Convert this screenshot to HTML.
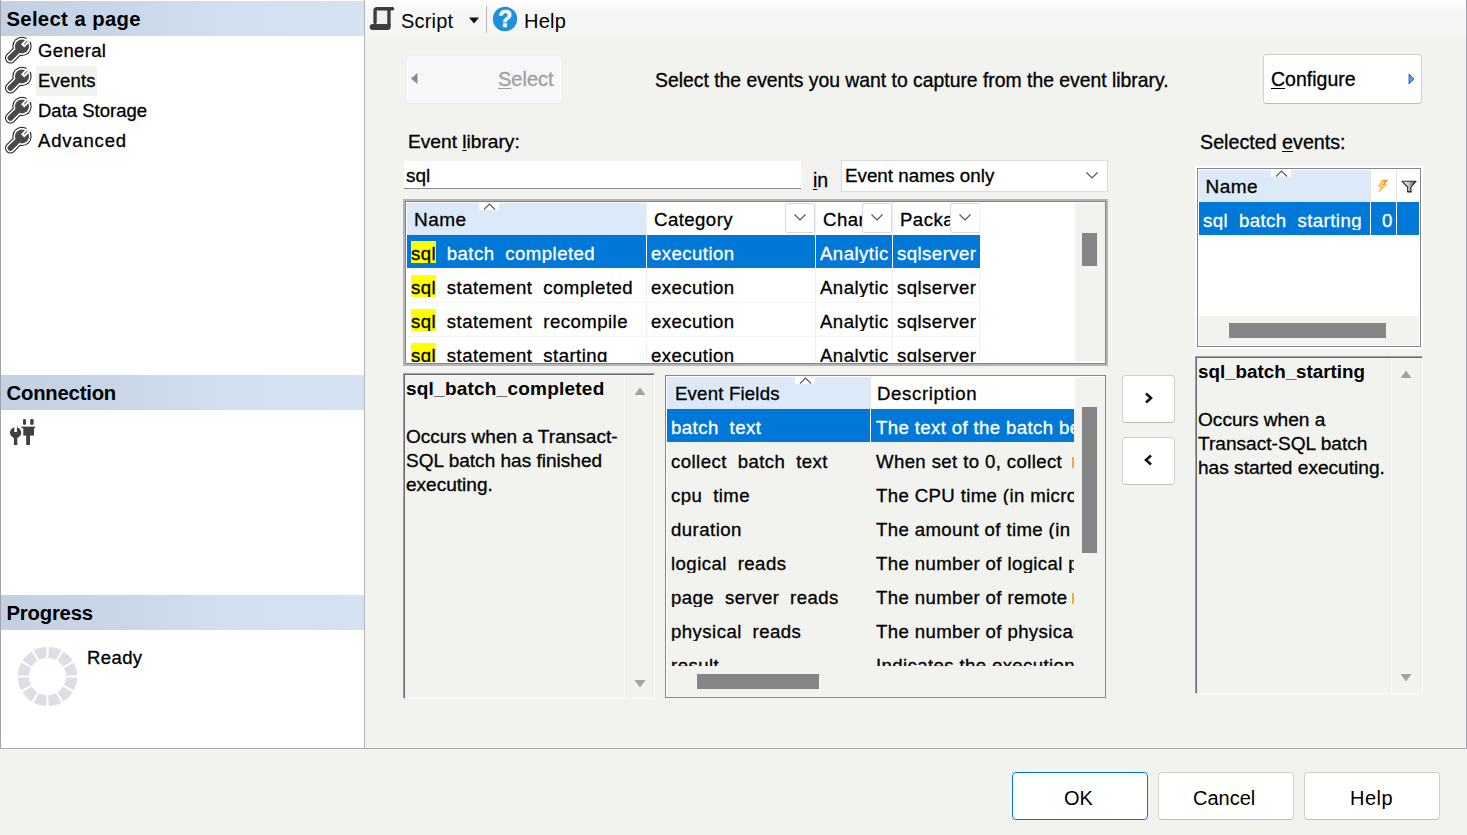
<!DOCTYPE html>
<html>
<head>
<meta charset="utf-8">
<title>New Session</title>
<style>
*{box-sizing:border-box;margin:0;padding:0}
html,body{width:1467px;height:835px;overflow:hidden;background:#f2f2ee}
body{font-family:"Liberation Sans",sans-serif;color:#000;-webkit-text-stroke:.3px currentColor;position:relative;font-size:18.5px}
.a{position:absolute}
.t{position:absolute;white-space:nowrap;line-height:1}
u{text-decoration:underline;text-underline-offset:2px;text-decoration-thickness:1px}
/* left panel */
#left{left:0;top:0;width:365px;height:749px;background:#fff;border-left:1px solid #a3a3ab;border-right:1px solid #b4b4b8;border-bottom:1px solid #b9b9bd}
.hd{left:1px;width:363px;height:35px;background:linear-gradient(90deg,#c3d0e2 0%,#c9d7e8 35%,#d3e0f1 65%,#d5e2f2 100%)}
.hd .t{left:5.5px;top:8.3px;font-weight:bold;font-size:20.3px;letter-spacing:-.2px;-webkit-text-stroke:0}
.pg{font-size:18.5px;letter-spacing:.18px}
/* toolbar */
#tb{left:365px;top:0;width:1102px;height:38px;background:linear-gradient(#fefefe 0,#fbfbfb 6px,#f6f6f6 10px,#f6f6f6 33px,#f2f2ee 38px)}
.tbt{font-size:20px;-webkit-text-stroke:0}
/* grids */
.grid{background:#fff;overflow:hidden}
.cell{position:absolute;overflow:hidden;white-space:nowrap;line-height:1}
.hdt{font-size:18.6px;letter-spacing:.45px;padding-top:2.5px}
.rt{font-size:18.6px;letter-spacing:.45px;padding-top:4px}
.rt i{display:inline-block;width:calc(.556em + .45px)}
.ds{letter-spacing:.38px}
.y{position:absolute;background:#ffff00}
.w{color:#fff}
.sel{background:#0078d7;color:#fff}
.hl{background:#ffff00;color:#000}
.btn{background:#fff;border:1px solid #d0d0d0;border-bottom-color:#bcbcbc;border-radius:4px}
</style>
</head>
<body>

<div id="tb" class="a"></div>
<!-- LEFT PANEL -->
<div id="left" class="a"></div>
<div class="a hd" style="top:1px"><div class="t" style="letter-spacing:.3px;word-spacing:.4px">Select a page</div></div>
<div class="a hd" style="top:375px"><div class="t">Connection</div></div>
<div class="a hd" style="top:595px"><div class="t">Progress</div></div>

<div class="a" style="left:36px;top:66px;width:61px;height:30px;background:#f2f2ee"></div>
<div class="t pg" style="left:38px;top:42px;letter-spacing:.35px">General</div>
<div class="t pg" style="left:38px;top:72px">Events</div>
<div class="t pg" style="left:38px;top:102px;letter-spacing:0">Data Storage</div>
<div class="t pg" style="left:38px;top:132px;letter-spacing:.82px">Advanced</div>
<div class="t pg" style="left:87px;top:649px;letter-spacing:.4px">Ready</div>

<svg class="a" style="left:4px;top:36px" width="30" height="28" viewBox="0 0 30 28">
<g fill="none" stroke-linecap="round"><circle cx="18" cy="10.4" r="9.6" fill="#1a1a1a" stroke="none"/><path d="M16.5 12 L6.4 22.1" stroke="#1a1a1a" stroke-width="10.8"/>
<circle cx="18" cy="10.4" r="8.6" fill="#fff" stroke="none"/><path d="M16.5 12 L6.4 22.1" stroke="#fff" stroke-width="8.8"/>
<circle cx="18" cy="10.4" r="7" fill="#4a4a4a" stroke="none"/><path d="M16.5 12 L6.4 22.1" stroke="#4a4a4a" stroke-width="5.6"/>
<path d="M18.6 9.8 L26.4 2" stroke="#fff" stroke-width="4.6" stroke-linecap="butt"/><path d="M20.2 8.2 L23.4 5" stroke="#222" stroke-width="1" stroke-linecap="butt"/></g></svg>
<svg class="a" style="left:4px;top:66px" width="30" height="28" viewBox="0 0 30 28">
<g fill="none" stroke-linecap="round"><circle cx="18" cy="10.4" r="9.6" fill="#1a1a1a" stroke="none"/><path d="M16.5 12 L6.4 22.1" stroke="#1a1a1a" stroke-width="10.8"/>
<circle cx="18" cy="10.4" r="8.6" fill="#fff" stroke="none"/><path d="M16.5 12 L6.4 22.1" stroke="#fff" stroke-width="8.8"/>
<circle cx="18" cy="10.4" r="7" fill="#4a4a4a" stroke="none"/><path d="M16.5 12 L6.4 22.1" stroke="#4a4a4a" stroke-width="5.6"/>
<path d="M18.6 9.8 L26.4 2" stroke="#fff" stroke-width="4.6" stroke-linecap="butt"/><path d="M20.2 8.2 L23.4 5" stroke="#222" stroke-width="1" stroke-linecap="butt"/></g></svg>
<svg class="a" style="left:4px;top:96px" width="30" height="28" viewBox="0 0 30 28">
<g fill="none" stroke-linecap="round"><circle cx="18" cy="10.4" r="9.6" fill="#1a1a1a" stroke="none"/><path d="M16.5 12 L6.4 22.1" stroke="#1a1a1a" stroke-width="10.8"/>
<circle cx="18" cy="10.4" r="8.6" fill="#fff" stroke="none"/><path d="M16.5 12 L6.4 22.1" stroke="#fff" stroke-width="8.8"/>
<circle cx="18" cy="10.4" r="7" fill="#4a4a4a" stroke="none"/><path d="M16.5 12 L6.4 22.1" stroke="#4a4a4a" stroke-width="5.6"/>
<path d="M18.6 9.8 L26.4 2" stroke="#fff" stroke-width="4.6" stroke-linecap="butt"/><path d="M20.2 8.2 L23.4 5" stroke="#222" stroke-width="1" stroke-linecap="butt"/></g></svg>
<svg class="a" style="left:4px;top:126px" width="30" height="28" viewBox="0 0 30 28">
<g fill="none" stroke-linecap="round"><circle cx="18" cy="10.4" r="9.6" fill="#1a1a1a" stroke="none"/><path d="M16.5 12 L6.4 22.1" stroke="#1a1a1a" stroke-width="10.8"/>
<circle cx="18" cy="10.4" r="8.6" fill="#fff" stroke="none"/><path d="M16.5 12 L6.4 22.1" stroke="#fff" stroke-width="8.8"/>
<circle cx="18" cy="10.4" r="7" fill="#4a4a4a" stroke="none"/><path d="M16.5 12 L6.4 22.1" stroke="#4a4a4a" stroke-width="5.6"/>
<path d="M18.6 9.8 L26.4 2" stroke="#fff" stroke-width="4.6" stroke-linecap="butt"/><path d="M20.2 8.2 L23.4 5" stroke="#222" stroke-width="1" stroke-linecap="butt"/></g></svg>
<svg class="a" style="left:368px;top:5px" width="28" height="27" viewBox="0 0 28 27">
<rect x="8" y="5" width="12" height="15" fill="#f0eef0"/>
<path d="M7.05 17.5 V5.6 Q7.05 3.8 8.9 3.8 H24.6" fill="none" stroke="#3d3d3d" stroke-width="3.4" stroke-linecap="round" stroke-linejoin="round"/>
<path d="M20.95 4 V21" fill="none" stroke="#3d3d3d" stroke-width="3.4"/>
<path d="M4.6 19.1 H22.65 V22 Q22.65 24.9 19.7 24.9 H4.6 Q1.7 24.9 1.7 22 Q1.7 19.1 4.6 19.1 Z" fill="#3d3d3d"/></svg>
<svg class="a" style="left:468px;top:17px" width="12" height="7" viewBox="0 0 12 7"><path d="M1 0.5 H11 L6 6.5 Z" fill="#111"/></svg>
<div class="a" style="left:486px;top:6px;width:1px;height:27px;background:#b8b8b8"></div>
<svg class="a" style="left:492px;top:6px" width="26" height="26" viewBox="0 0 26 26"><circle cx="13" cy="13" r="12.2" fill="#1e90dd"/>
<text x="13.2" y="21.4" text-anchor="middle" font-family="Liberation Sans, sans-serif" font-weight="bold" font-size="23" fill="#fff" stroke="#fff" stroke-width=".5">?</text></svg>
<svg class="a" style="left:8px;top:417px" width="30" height="30" viewBox="0 0 30 30"><g fill="#3f3f3f">
<path d="M6.3 10.2 A5.6 5.6 0 1 0 8.9 10.2 V15 H6.3 Z"/><rect x="5.9" y="19" width="3.4" height="9"/>
<rect x="15" y="2" width="3" height="6" rx="1.4"/><rect x="22.2" y="2" width="3.4" height="6" rx="1.4"/>
<rect x="13.4" y="9.6" width="13.8" height="1.6"/><rect x="15.3" y="11" width="10.7" height="7.6"/><rect x="18.2" y="18" width="3.8" height="10"/>
</g></svg>
<svg class="a" style="left:17px;top:646px" width="61" height="61" viewBox="0 0 61 61"><g fill="#dcdfe3" style="filter:blur(.45px)"><path d="M31.8 0.7 A29.8 29.8 0 0 1 44.3 4.1 L39.1 14.0 A18.6 18.6 0 0 0 31.3 11.9 Z"/><path d="M46.5 5.4 A29.8 29.8 0 0 1 55.6 14.5 L46.2 20.5 A18.6 18.6 0 0 0 40.5 14.8 Z"/><path d="M56.9 16.7 A29.8 29.8 0 0 1 60.3 29.2 L49.1 29.7 A18.6 18.6 0 0 0 47.0 21.9 Z"/><path d="M60.3 31.8 A29.8 29.8 0 0 1 56.9 44.3 L47.0 39.1 A18.6 18.6 0 0 0 49.1 31.3 Z"/><path d="M55.6 46.5 A29.8 29.8 0 0 1 46.5 55.6 L40.5 46.2 A18.6 18.6 0 0 0 46.2 40.5 Z"/><path d="M44.3 56.9 A29.8 29.8 0 0 1 31.8 60.3 L31.3 49.1 A18.6 18.6 0 0 0 39.1 47.0 Z"/><path d="M29.2 60.3 A29.8 29.8 0 0 1 16.7 56.9 L21.9 47.0 A18.6 18.6 0 0 0 29.7 49.1 Z"/><path d="M14.5 55.6 A29.8 29.8 0 0 1 5.4 46.5 L14.8 40.5 A18.6 18.6 0 0 0 20.5 46.2 Z"/><path d="M4.1 44.3 A29.8 29.8 0 0 1 0.7 31.8 L11.9 31.3 A18.6 18.6 0 0 0 14.0 39.1 Z"/><path d="M0.7 29.2 A29.8 29.8 0 0 1 4.1 16.7 L14.0 21.9 A18.6 18.6 0 0 0 11.9 29.7 Z"/><path d="M5.4 14.5 A29.8 29.8 0 0 1 14.5 5.4 L20.5 14.8 A18.6 18.6 0 0 0 14.8 20.5 Z"/><path d="M16.7 4.1 A29.8 29.8 0 0 1 29.2 0.7 L29.7 11.9 A18.6 18.6 0 0 0 21.9 14.0 Z"/></g></svg>
<!-- TOOLBAR -->
<div class="t tbt" style="left:401px;top:10.6px;letter-spacing:.2px">Script</div>
<div class="t tbt" style="left:524px;top:10.6px;letter-spacing:.25px">Help</div>

<div class="a" style="left:1466px;top:0;width:1px;height:749px;background:#a4a4ac"></div>
<!-- MAIN -->
<!-- Select button -->
<div class="a" style="left:405px;top:55px;width:158px;height:49px;background:#f7f7f7;border:1px solid #ececec;border-radius:4px"></div>
<svg class="a" style="left:410px;top:72px" width="9" height="13" viewBox="0 0 9 13"><path d="M7.5 1 L1 6.5 L7.5 12 Z" fill="#8c8c8c"/></svg>
<div class="t" style="left:498px;top:69px;font-size:20px;color:#a39ea6"><u>S</u>elect</div>

<div class="t" id="instr" style="left:655px;top:71px;font-size:19.35px">Select the events you want to capture from the event library.</div>

<!-- Configure button -->
<div class="a btn" style="left:1263px;top:54px;width:159px;height:50px;background:#fff"></div>
<div class="t" style="left:1271px;top:70px;font-size:19.5px"><u>C</u>onfigure</div>
<svg class="a" style="left:1408px;top:73px" width="7" height="12" viewBox="0 0 7 12"><path d="M1 1 L6 6 L1 11 Z" fill="#5b9bd5" stroke="#2f6fb5" stroke-width="1"/></svg>

<!-- Event library label + search -->
<div class="t" style="left:408px;top:132px;font-size:19.15px">Event <u>l</u>ibrary:</div>
<div class="a" style="left:404px;top:161px;width:397px;height:28px;background:#fff;border-bottom:1px solid #8a8a8a"></div>
<div class="t" style="left:406px;top:166px;font-size:19px">sql</div>
<div class="t" style="left:813px;top:171px;font-size:19.5px"><u>i</u>n</div>
<div class="a" style="left:841px;top:160px;width:267px;height:32px;background:#fff;border:1px solid #dcdcdc"></div>
<div class="t" style="left:845px;top:167px;font-size:18.8px">Event names only</div>
<svg class="a" style="left:1085px;top:171px" width="14" height="9" viewBox="0 0 14 9"><path d="M1.5 1.5 L7 7 L12.5 1.5" fill="none" stroke="#555" stroke-width="1.2"/></svg>

<!-- EVENTS GRID -->
<div class="a" id="g1" style="left:403px;top:199px;width:705px;height:167px;background:#b4b4b4"></div>
<div class="a" style="left:405px;top:201px;width:701px;height:163px;background:#84848c"></div>
<div class="a" style="left:406px;top:202px;width:699px;height:161px;background:#fff"></div>
<div class="a" style="left:0;top:0;width:1467px;height:362px;overflow:hidden">
<div class="a" style="left:407px;top:203px;width:668px;height:159px;background:#fff"></div>
<div class="a" style="left:1075px;top:203px;width:30px;height:159px;background:#f2f2ee"></div>
<div class="a" style="left:1082px;top:233px;width:15px;height:33px;background:#858585"></div>
<div class="a" style="left:407px;top:203px;width:239px;height:32px;background:#dbe9f8"></div>
<div class="a" style="left:479px;top:203px;width:20px;height:7px;background:#fff"></div>
<svg class="a" style="left:483px;top:203px" width="13" height="7" viewBox="0 0 13 7"><path d="M1 6.5 L6.5 1 L12 6.5" fill="none" stroke="#5a5a5a" stroke-width="1.1"/></svg>
<div class="cell hdt" style="left:414px;top:207px;width:200px;height:24px;font-size:19px;letter-spacing:.5px">Name</div>
<div class="cell hdt" style="left:654px;top:208px;width:130px;height:24px">Category</div>
<div class="cell hdt" style="left:823px;top:208px;width:40px;height:24px">Channel</div>
<div class="cell hdt" style="left:900px;top:208px;width:51px;height:24px">Package</div>
<div class="a" style="left:785px;top:203px;width:30px;height:30px;background:#fff;border:1px solid #dadada;border-radius:2px"></div>
<svg class="a" style="left:793px;top:213px" width="14" height="9" viewBox="0 0 14 9"><path d="M1.5 1.5 L7 7 L12.5 1.5" fill="none" stroke="#555" stroke-width="1.2"/></svg>
<div class="a" style="left:862px;top:203px;width:30px;height:30px;background:#fff;border:1px solid #dadada;border-radius:2px"></div>
<svg class="a" style="left:870px;top:213px" width="14" height="9" viewBox="0 0 14 9"><path d="M1.5 1.5 L7 7 L12.5 1.5" fill="none" stroke="#555" stroke-width="1.2"/></svg>
<div class="a" style="left:950px;top:203px;width:30px;height:30px;background:#fff;border:1px solid #dadada;border-radius:2px"></div>
<svg class="a" style="left:958px;top:213px" width="14" height="9" viewBox="0 0 14 9"><path d="M1.5 1.5 L7 7 L12.5 1.5" fill="none" stroke="#555" stroke-width="1.2"/></svg>
<div class="a" style="left:646px;top:203px;width:1px;height:159px;background:#f0f0f0"></div>
<div class="a" style="left:815px;top:203px;width:1px;height:159px;background:#f0f0f0"></div>
<div class="a" style="left:892px;top:203px;width:1px;height:159px;background:#f0f0f0"></div>
<div class="a" style="left:979px;top:203px;width:1px;height:159px;background:#f0f0f0"></div>
<div class="a" style="left:407px;top:235px;width:573px;height:33px;background:#0078d7"></div>
<div class="a" style="left:646px;top:235px;width:1px;height:33px;background:#fff"></div>
<div class="a" style="left:815px;top:235px;width:1px;height:33px;background:#fff"></div>
<div class="a" style="left:892px;top:235px;width:1px;height:33px;background:#fff"></div>
<div class="y" style="left:411px;top:241px;width:25px;height:22px"></div>
<div class="cell rt" style="left:411px;top:241px;width:26px;height:22px">sql</div>
<div class="cell rt w" style="left:436px;top:241px;width:209px;height:22px"><i></i>batch<i></i>completed</div>
<div class="cell rt w" style="left:651px;top:241px;width:160px;height:22px">execution</div>
<div class="cell rt w" style="left:820px;top:241px;width:70px;height:22px">Analytic</div>
<div class="cell rt w" style="left:897px;top:241px;width:81px;height:22px">sqlserver</div>
<div class="a" style="left:407px;top:302px;width:573px;height:1px;background:#f3f3f3"></div>
<div class="y" style="left:411px;top:275px;width:25px;height:22px"></div>
<div class="cell rt" style="left:411px;top:275px;width:26px;height:22px">sql</div>
<div class="cell rt " style="left:436px;top:275px;width:209px;height:22px"><i></i>statement<i></i>completed</div>
<div class="cell rt " style="left:651px;top:275px;width:160px;height:22px">execution</div>
<div class="cell rt " style="left:820px;top:275px;width:70px;height:22px">Analytic</div>
<div class="cell rt " style="left:897px;top:275px;width:81px;height:22px">sqlserver</div>
<div class="a" style="left:407px;top:336px;width:573px;height:1px;background:#f3f3f3"></div>
<div class="y" style="left:411px;top:309px;width:25px;height:22px"></div>
<div class="cell rt" style="left:411px;top:309px;width:26px;height:22px">sql</div>
<div class="cell rt " style="left:436px;top:309px;width:209px;height:22px"><i></i>statement<i></i>recompile</div>
<div class="cell rt " style="left:651px;top:309px;width:160px;height:22px">execution</div>
<div class="cell rt " style="left:820px;top:309px;width:70px;height:22px">Analytic</div>
<div class="cell rt " style="left:897px;top:309px;width:81px;height:22px">sqlserver</div>
<div class="a" style="left:407px;top:370px;width:573px;height:1px;background:#f3f3f3"></div>
<div class="y" style="left:411px;top:343px;width:25px;height:22px"></div>
<div class="cell rt" style="left:411px;top:343px;width:26px;height:22px">sql</div>
<div class="cell rt " style="left:436px;top:343px;width:209px;height:22px"><i></i>statement<i></i>starting</div>
<div class="cell rt " style="left:651px;top:343px;width:160px;height:22px">execution</div>
<div class="cell rt " style="left:820px;top:343px;width:70px;height:22px">Analytic</div>
<div class="cell rt " style="left:897px;top:343px;width:81px;height:22px">sqlserver</div>
</div>


<!-- description left -->
<div class="a" id="d1" style="left:403px;top:373px;width:252px;height:326px;background:#f2f2ee;border-left:1px solid #a0a0a0;border-top:1px solid #a0a0a0;border-right:1px solid #fbfbfb;border-bottom:1px solid #fbfbfb"></div>
<div class="a" style="left:404px;top:374px;width:250px;height:324px;border-left:1px solid #696971;border-top:1px solid #696971"></div>
<div class="t" style="left:406px;top:379px;font-size:19px;letter-spacing:.22px;font-weight:bold;-webkit-text-stroke:0">sql_batch_completed</div>
<div class="t" style="left:406px;top:425px;font-size:19.05px;line-height:24px;white-space:normal;width:225px">Occurs when a Transact-<br>SQL batch has finished<br>executing.</div>

<div class="a" style="left:624px;top:375px;width:1px;height:323px;background:#fafafa"></div>
<svg class="a" style="left:634px;top:387px" width="12" height="9" viewBox="0 0 12 9"><path d="M6 0.5 L11.5 8 L0.5 8 Z" fill="#a3a3a3"/></svg>
<svg class="a" style="left:634px;top:679px" width="12" height="9" viewBox="0 0 12 9"><path d="M6 8.5 L11.5 1 L0.5 1 Z" fill="#a3a3a3"/></svg>
<!-- event fields grid -->
<div class="a" id="g2" style="left:665px;top:375px;width:441px;height:323px;background:#f2f2ee;border:1px solid #85858d"></div>
<div class="a" style="left:666px;top:376px;width:439px;height:1px;background:#fff"></div>
<div class="a" style="left:666px;top:376px;width:1px;height:321px;background:#fff"></div>

<div class="a" style="left:0;top:0;width:1467px;height:666px;overflow:hidden">
<div class="a" style="left:667px;top:377px;width:204px;height:32px;background:#dbe9f8"></div>
<div class="a" style="left:871px;top:377px;width:204px;height:32px;background:#fff"></div>
<div class="a" style="left:795px;top:377px;width:20px;height:7px;background:#fff"></div>
<svg class="a" style="left:799px;top:377px" width="13" height="7" viewBox="0 0 13 7"><path d="M1 6.5 L6.5 1 L12 6.5" fill="none" stroke="#5a5a5a" stroke-width="1.1"/></svg>
<div class="cell hdt" style="left:675px;top:382px;width:190px;height:24px;letter-spacing:.2px">Event Fields</div>
<div class="cell hdt" style="left:877px;top:382px;width:190px;height:24px;letter-spacing:.65px">Description</div>
<div class="a" style="left:870px;top:377px;width:1px;height:32px;background:#e4e4e4"></div>
<div class="a" style="left:667px;top:409px;width:407px;height:33px;background:#0078d7"></div>
<div class="a" style="left:870px;top:409px;width:1px;height:33px;background:#fff"></div>
<div class="cell rt w" style="left:671px;top:415px;width:198px;height:22px">batch<i></i>text</div>
<div class="cell rt ds w" style="left:876px;top:415px;width:198px;height:22px">The text of the batch being executed</div>
<div class="cell rt " style="left:671px;top:449px;width:198px;height:22px">collect<i></i>batch<i></i>text</div>
<div class="cell rt ds " style="left:876px;top:449px;width:198px;height:22px">When set to 0, collect</div>
<div class="cell rt " style="left:671px;top:483px;width:198px;height:22px">cpu<i></i>time</div>
<div class="cell rt ds " style="left:876px;top:483px;width:198px;height:22px">The CPU time (in microseconds)</div>
<div class="cell rt " style="left:671px;top:517px;width:198px;height:22px">duration</div>
<div class="cell rt ds " style="left:876px;top:517px;width:198px;height:22px">The amount of time (in microseconds)</div>
<div class="cell rt " style="left:671px;top:551px;width:198px;height:22px">logical<i></i>reads</div>
<div class="cell rt ds " style="left:876px;top:551px;width:198px;height:22px">The number of logical page reads</div>
<div class="cell rt " style="left:671px;top:585px;width:198px;height:22px">page<i></i>server<i></i>reads</div>
<div class="cell rt ds " style="left:876px;top:585px;width:198px;height:22px">The number of remote</div>
<div class="cell rt " style="left:671px;top:619px;width:198px;height:22px">physical<i></i>reads</div>
<div class="cell rt ds " style="left:876px;top:619px;width:198px;height:22px">The number of physical page reads</div>
<div class="cell rt " style="left:671px;top:653px;width:198px;height:22px">result</div>
<div class="cell rt ds " style="left:876px;top:653px;width:198px;height:22px">Indicates the execution result</div>
<div class="a" style="left:1075px;top:377px;width:30px;height:320px;background:#f2f2ee"></div>
<div class="a" style="left:1082px;top:407px;width:15px;height:146px;background:#858585"></div>
</div>
<div class="a" style="left:667px;top:666px;width:438px;height:31px;background:#f2f2ee"></div>
<div class="a" style="left:697px;top:674px;width:122px;height:15px;background:#858585"></div>
<div class="a" style="left:1072px;top:457px;width:2px;height:11px;background:#eea844"></div>
<div class="a" style="left:1072px;top:593px;width:2px;height:11px;background:#eea844"></div>
<!-- > < buttons -->
<div class="a btn" style="left:1122px;top:375px;width:53px;height:48px"></div>
<div class="a btn" style="left:1122px;top:437px;width:53px;height:48px"></div>
<svg class="a" style="left:1144px;top:392px" width="9" height="12" viewBox="0 0 9 12"><path d="M2 1.5 L7 6 L2 10.5" fill="none" stroke="#111" stroke-width="2.6"/></svg>
<svg class="a" style="left:1144px;top:454px" width="9" height="12" viewBox="0 0 9 12"><path d="M7 1.5 L2 6 L7 10.5" fill="none" stroke="#111" stroke-width="2.6"/></svg>

<!-- Selected events -->
<div class="t" style="left:1200px;top:133px;font-size:19.7px">Selected <u>e</u>vents:</div>
<div class="a" id="g3" style="left:1195px;top:166px;width:228px;height:183px;background:#fff"></div>
<div class="a" style="left:1197px;top:168px;width:224px;height:179px;background:#fff;border:1px solid #85858d"></div>

<div class="a" style="left:1199px;top:170px;width:171px;height:32px;background:#dbe9f8"></div>
<div class="a" style="left:1271px;top:170px;width:20px;height:7px;background:#fff"></div>
<svg class="a" style="left:1275px;top:170px" width="13" height="7" viewBox="0 0 13 7"><path d="M1 6.5 L6.5 1 L12 6.5" fill="none" stroke="#5a5a5a" stroke-width="1.1"/></svg>
<div class="cell hdt" style="left:1205.5px;top:174.5px;width:150px;height:24px;font-size:19px;letter-spacing:.5px">Name</div>
<div class="a" style="left:1370px;top:170px;width:1px;height:65px;background:#e4e4e4"></div>
<div class="a" style="left:1396px;top:170px;width:1px;height:65px;background:#e4e4e4"></div>
<div class="a" style="left:1199px;top:202px;width:220px;height:33px;background:#0078d7"></div>
<div class="a" style="left:1370px;top:202px;width:1px;height:33px;background:#fff"></div>
<div class="a" style="left:1396px;top:202px;width:1px;height:33px;background:#fff"></div>
<div class="cell rt w" style="left:1203px;top:208px;width:166px;height:22px">sql<i></i>batch<i></i>starting</div>
<div class="cell rt w" style="left:1382px;top:208px;width:14px;height:22px">0</div>
<div class="a" style="left:1199px;top:316px;width:220px;height:29px;background:#f2f2ee"></div>
<div class="a" style="left:1229px;top:323px;width:157px;height:15px;background:#858585"></div>
<svg class="a" style="left:1377px;top:179px" width="12" height="14" viewBox="0 0 12 14"><path d="M5 1 L11 1 L7 5.5 L9.5 5.5 L2 13 L4.5 7.5 L1.5 7.5 Z" fill="#f9d84a" stroke="#e39a3e" stroke-width=".6"/><path d="M6.2 2 L9.5 2 L6 6" fill="none" stroke="#e86a7a" stroke-width="1"/></svg>
<svg class="a" style="left:1401px;top:180px" width="16" height="13" viewBox="0 0 16 13"><defs><linearGradient id="fg" x1="0" x2="1"><stop offset="0" stop-color="#fafafa"/><stop offset=".5" stop-color="#c4c4c4"/><stop offset="1" stop-color="#2a2a2a"/></linearGradient></defs><path d="M1 1.3 L15 1.3 L10 7 L10 11.8 L6.6 11.8 L6.6 7 Z" fill="url(#fg)" stroke="#2e2e2e" stroke-width="1.1" stroke-linejoin="round"/><path d="M6.6 11.8 H10.4" stroke="#222" stroke-width="1.2"/></svg>
<!-- description right -->
<div class="a" id="d2" style="left:1195px;top:356px;width:228px;height:338px;background:#f2f2ee;border-left:1px solid #a0a0a0;border-top:1px solid #a0a0a0;border-right:1px solid #fbfbfb;border-bottom:1px solid #fbfbfb"></div>
<div class="a" style="left:1196px;top:357px;width:226px;height:336px;border-left:1px solid #696971;border-top:1px solid #696971"></div>
<div class="t" style="left:1198px;top:363px;font-size:18.8px;font-weight:bold;-webkit-text-stroke:0">sql_batch_starting</div>
<div class="t" style="left:1198px;top:408px;font-size:19.1px;line-height:24px">Occurs when a<br>Transact-SQL batch<br>has started executing.</div>

<div class="a" style="left:1391px;top:358px;width:1px;height:335px;background:#fafafa"></div>
<svg class="a" style="left:1400px;top:370px" width="12" height="9" viewBox="0 0 12 9"><path d="M6 0.5 L11.5 8 L0.5 8 Z" fill="#a3a3a3"/></svg>
<svg class="a" style="left:1400px;top:673px" width="12" height="9" viewBox="0 0 12 9"><path d="M6 8.5 L11.5 1 L0.5 1 Z" fill="#a3a3a3"/></svg>
<!-- bottom buttons -->
<div class="a btn" style="left:1012px;top:772px;width:136px;height:48px;border-color:#0078d7;border-width:1.3px"></div>
<div class="a btn" style="left:1158px;top:772px;width:136px;height:48px"></div>
<div class="a btn" style="left:1304px;top:772px;width:136px;height:48px"></div>
<div class="t" style="left:1064px;top:787.6px;font-size:20px;-webkit-text-stroke:0">OK</div>
<div class="t" style="left:1193px;top:787.6px;font-size:20px;-webkit-text-stroke:0">Cancel</div>
<div class="t" style="left:1350px;top:787.6px;font-size:20px;letter-spacing:.5px;-webkit-text-stroke:0">Help</div>

<div class="a" style="left:0;top:748px;width:1467px;height:1px;background:#a9a9b1"></div>

</body>
</html>
